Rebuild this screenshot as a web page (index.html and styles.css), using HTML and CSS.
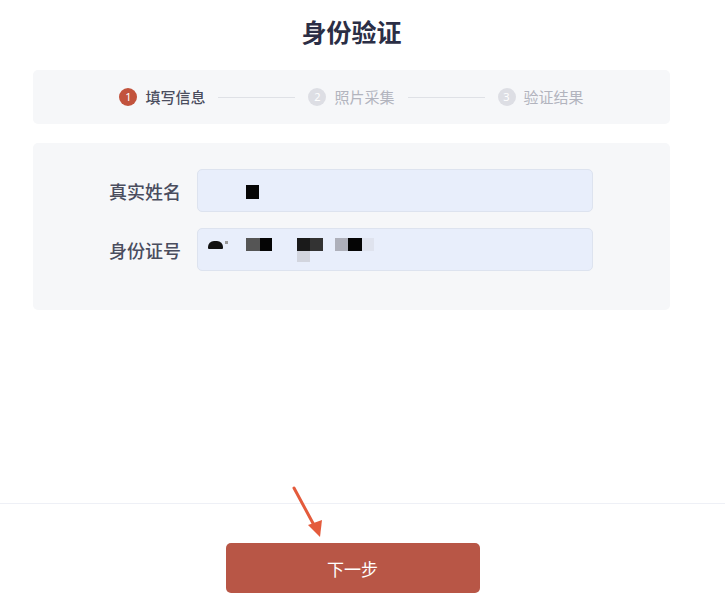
FILE: index.html
```html
<!DOCTYPE html>
<html lang="zh-CN">
<head>
<meta charset="utf-8">
<title>身份验证</title>
<link rel="stylesheet" href="styles.css">
</head>
<body>
<div class="page">
  <main class="main">
    <h1 class="title">身份验证</h1>
    <div class="steps">
      <div class="step active"><span class="dot">1</span><span class="label">填写信息</span></div>
      <span class="line"></span>
      <div class="step"><span class="dot">2</span><span class="label">照片采集</span></div>
      <span class="line"></span>
      <div class="step"><span class="dot">3</span><span class="label">验证结果</span></div>
    </div>
    <div class="card">
      <div class="row">
        <label class="field-label">真实姓名</label>
        <div class="input">
          <span class="blk b1"></span>
        </div>
      </div>
      <div class="row">
        <label class="field-label">身份证号</label>
        <div class="input">
          <span class="blk s1"></span>
          <span class="blk s2"></span>
          <span class="blk s3"></span>
          <span class="blk s4"></span>
          <span class="blk s5"></span>
          <span class="blk s6"></span>
          <span class="blk s7"></span>
          <span class="blk s8"></span>
          <span class="blk s9"></span>
          <span class="blk s10"></span>
        </div>
      </div>
    </div>
  </main>
  <footer class="footer">
    <button class="next">下一步</button>
  </footer>
  <svg class="arrow" width="40" height="60" viewBox="0 0 40 60">
    <line x1="4" y1="3" x2="25" y2="42" stroke="#e45b3c" stroke-width="3" stroke-linecap="round"/>
    <polygon points="18,40 32,35 30,52" fill="#e45b3c"/>
  </svg>
</div>
</body>
</html>
```
FILE: styles.css
```css
* { box-sizing: border-box; }
html, body { margin: 0; padding: 0; background: #ffffff; }
body {
  font-family: "Noto Sans CJK SC", "Noto Sans", sans-serif;
  color: #3c3f50;
}
.page {
  position: relative;
  width: 725px;
  height: 605px;
  overflow: hidden;
}
.main {
  height: 503px;
  padding-left: 33px;
  width: 670px;
}
.title {
  margin: 0;
  padding-top: 14px;
  height: 70px;
  font-size: 25px;
  line-height: 34px;
  font-weight: 700;
  color: #2b2e45;
  text-align: center;
}
.steps {
  height: 54px;
  background: #f6f7f9;
  border-radius: 5px;
  display: flex;
  align-items: center;
  justify-content: center;
  gap: 13px;
}
.step {
  display: flex;
  align-items: center;
  gap: 8px;
}
.dot {
  width: 18px;
  height: 18px;
  border-radius: 50%;
  background: #dddee4;
  color: #ffffff;
  font-size: 11px;
  line-height: 18px;
  text-align: center;
  font-family: "Noto Sans", sans-serif;
}
.label {
  font-size: 15px;
  color: #b2b4be;
  line-height: 20px;
}
.active .dot { background: #c2533d; }
.active .label { color: #4a4d5e; font-weight: 500; }
.line {
  width: 77px;
  height: 1px;
  background: #dfe1e6;
}
.card {
  margin-top: 19px;
  background: #f6f7f9;
  border-radius: 5px;
  padding: 26px 77px 39px 69px;
  display: flex;
  flex-direction: column;
  gap: 16px;
}
.row {
  display: flex;
  align-items: center;
  gap: 15px;
}
.field-label {
  width: 80px;
  text-align: right;
  font-size: 18px;
  font-weight: 500;
  color: #4a4d5e;
  padding-right: 1px;
}
.input {
  position: relative;
  flex: 1;
  height: 43px;
  background: #e8eefb;
  border: 1px solid #dde3ef;
  border-radius: 5px;
}
.blk { position: absolute; display: block; }
.b1 { left: 48px; top: 15px; width: 13px; height: 14px; background: #050505; }
.s1 { left: 10px; top: 12px; width: 15px; height: 8px; background: #111; border-radius: 6px 6px 1px 1px; }
.s2 { left: 27px; top: 12px; width: 3px; height: 3px; background: #999; }
.s3 { left: 48px; top: 9px; width: 14px; height: 13px; background: #555; }
.s4 { left: 62px; top: 9px; width: 12px; height: 13px; background: #050505; }
.s5 { left: 99px; top: 9px; width: 13px; height: 13px; background: #1a1a1a; }
.s6 { left: 112px; top: 9px; width: 13px; height: 13px; background: #333; }
.s7 { left: 99px; top: 22px; width: 13px; height: 11px; background: #d2d5de; }
.s8 { left: 137px; top: 9px; width: 13px; height: 13px; background: #aeb0ba; }
.s9 { left: 150px; top: 9px; width: 14px; height: 13px; background: #050505; }
.s10 { left: 164px; top: 9px; width: 12px; height: 13px; background: #dfe3ee; }
.footer {
  border-top: 1px solid #eef0f6;
  padding-top: 39px;
  display: flex;
  justify-content: center;
  padding-right: 20px;
}
.next {
  width: 254px;
  height: 50px;
  background: #b85646;
  border: none;
  border-radius: 5px;
  color: #ffffff;
  font-family: "Noto Sans CJK SC", sans-serif;
  font-size: 17px;
}
.arrow {
  position: absolute;
  left: 290px;
  top: 485px;
}
```
